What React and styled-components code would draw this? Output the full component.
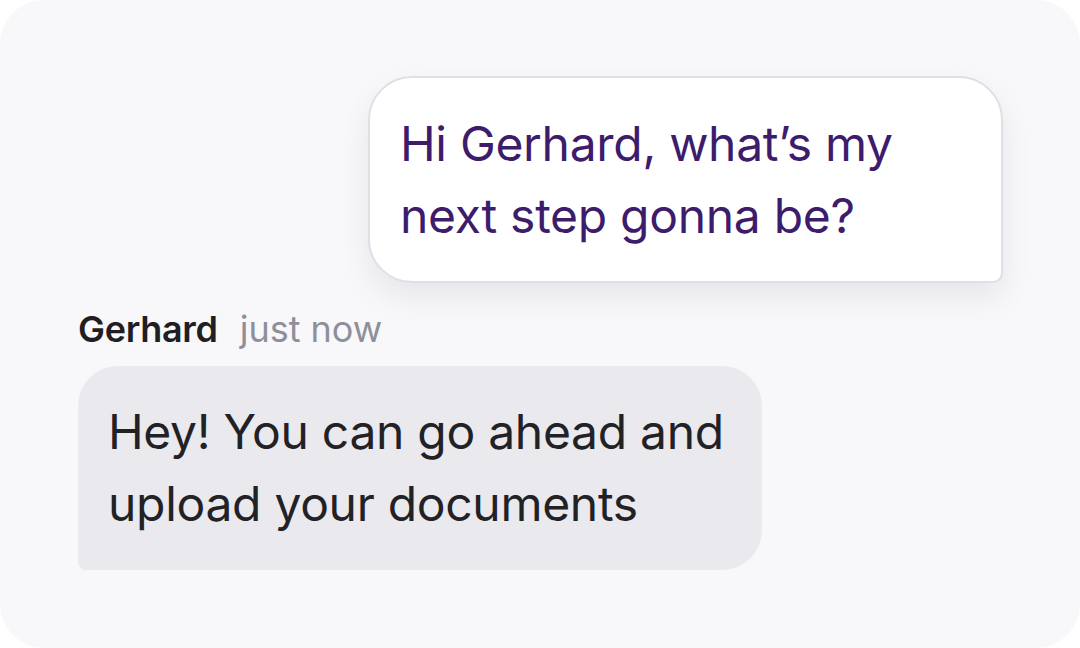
import React from "react";
import styled, { createGlobalStyle } from "styled-components";

const Global = createGlobalStyle`
  html, body { margin: 0; padding: 0; background: #ffffff; }
  body { font-family: "Inter", "Noto Sans", sans-serif; }
  * { box-sizing: border-box; }
`;

const Card = styled.div`
  width: 1080px;
  height: 648px;
  background: #f8f8fa;
  border-radius: 44px;
  padding: 76px 77px 78px 78px;
  display: flex;
  flex-direction: column;
  overflow: hidden;
`;

const OutRow = styled.div`
  display: flex;
  justify-content: flex-end;
`;

const Bubble = styled.div`
  font-size: 48px;
  line-height: 72px;
  letter-spacing: -0.3px;
  padding: 30px 30px ${(p) => (p.$mine ? 29 : 30)}px 30px;
  width: ${(p) => p.$w}px;
  color: ${(p) => (p.$mine ? "#3d1c6c" : "#222226")};
  background: ${(p) => (p.$mine ? "#ffffff" : "#e9e9ee")};
  border: ${(p) => (p.$mine ? "2px solid #dfdfe5" : "none")};
  border-radius: ${(p) => (p.$mine ? "44px 44px 10px 44px" : "40px 40px 40px 8px")};
  box-shadow: ${(p) => (p.$mine ? "0 14px 30px rgba(30, 30, 60, 0.08)" : "none")};
`;

const Meta = styled.div`
  display: flex;
  align-items: baseline;
  gap: 22px;
  margin-top: 24px;
  margin-bottom: 15px;
  font-size: 36px;
  line-height: 44px;
`;

const Name = styled.span`
  font-weight: 600;
  letter-spacing: -0.3px;
  color: #1f1f23;
`;

const Time = styled.span`
  color: #8f8f9a;
`;

export default function App() {
  return (
    <>
      <Global />
      <Card>
        <OutRow>
          <Bubble $mine $w={635}>
            Hi Gerhard, what’s my next step gonna be?
          </Bubble>
        </OutRow>
        <Meta>
          <Name>Gerhard</Name>
          <Time>just now</Time>
        </Meta>
        <Bubble $w={684}>
          Hey! You can go ahead and upload your documents
        </Bubble>
      </Card>
    </>
  );
}
